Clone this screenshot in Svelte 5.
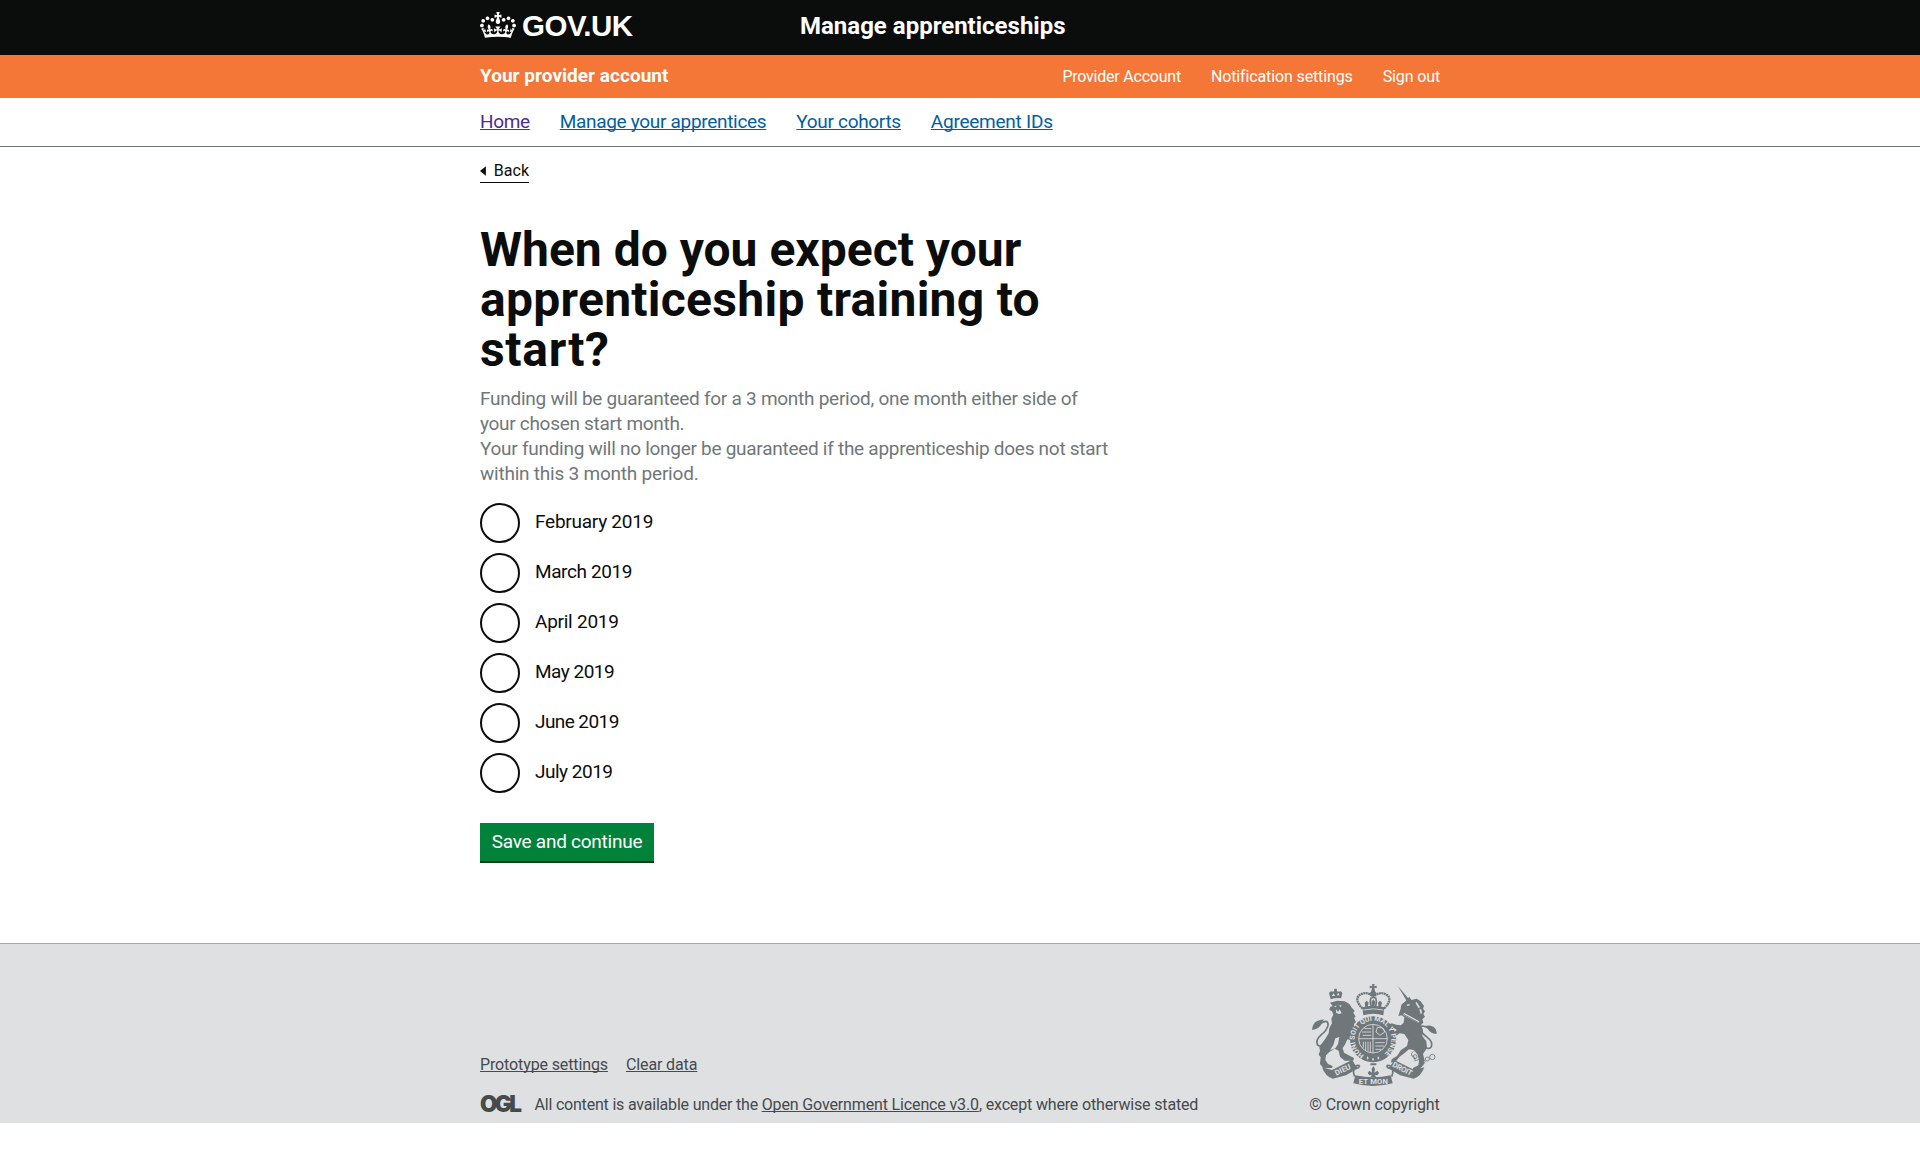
<script>
  const account = ['Provider Account', 'Notification settings', 'Sign out'];
  const nav = ['Home', 'Manage your apprentices', 'Your cohorts', 'Agreement IDs'];
  const months = ['February 2019', 'March 2019', 'April 2019', 'May 2019', 'June 2019', 'July 2019'];
  let chosen = $state('');
</script>

<header class="top">
  <div class="wrap top-row">
    <a class="logo" href="#home">
      <svg class="crown" viewBox="0 0 132 97" preserveAspectRatio="none" aria-hidden="true">
        <path fill="currentColor" fill-rule="evenodd" d="M25 30.2c3.5 1.5 7.7-.2 9.1-3.7 1.5-3.6-.2-7.8-3.9-9.2-3.6-1.4-7.6.3-9.1 3.9-1.4 3.5.3 7.5 3.9 9zM9 39.5c3.6 1.5 7.8-.2 9.2-3.7 1.5-3.6-.2-7.8-3.9-9.1-3.6-1.5-7.6.2-9.1 3.8-1.4 3.5.3 7.5 3.8 9zM4.4 57.2c3.5 1.5 7.7-.2 9.1-3.8 1.5-3.6-.2-7.7-3.9-9.1-3.5-1.5-7.6.3-9.1 3.8-1.4 3.5.3 7.6 3.9 9.1zm38.3-21.4c3.5 1.5 7.7-.2 9.1-3.8 1.5-3.6-.2-7.7-3.9-9.1-3.6-1.5-7.6.3-9.1 3.8-1.3 3.6.4 7.7 3.9 9.1zm64.4-5.6c-3.6 1.5-7.8-.2-9.1-3.7-1.5-3.6.2-7.8 3.8-9.2 3.6-1.4 7.7.3 9.2 3.9 1.3 3.5-.4 7.5-3.9 9zm15.9 9.3c-3.6 1.5-7.7-.2-9.1-3.7-1.5-3.6.2-7.8 3.7-9.1 3.6-1.5 7.7.2 9.2 3.8 1.5 3.5-.3 7.5-3.8 9zm4.7 17.7c-3.6 1.5-7.8-.2-9.2-3.8-1.5-3.6.2-7.7 3.9-9.1 3.6-1.5 7.7.3 9.2 3.8 1.3 3.5-.4 7.6-3.9 9.1zM89.3 35.8c-3.6 1.5-7.8-.2-9.2-3.8-1.4-3.6.2-7.7 3.9-9.1 3.6-1.5 7.7.3 9.2 3.8 1.4 3.6-.3 7.7-3.9 9.1zM69.7 17.7l8.9 4.7V9.3l-8.9 2.8c-.2-.3-.5-.6-.9-.9L72.4 0H59.6l3.5 11.2c-.3.3-.6.5-.9.9l-8.8-2.8v13.1l8.8-4.7c.3.3.6.7.9.9l-5 15.4v.1c-.2.8-.4 1.6-.4 2.4 0 4.1 3.1 7.5 7 8.1h.2c.3 0 .7.1 1 .1.4 0 .7 0 1-.1h.2c4-.6 7.1-4.1 7.1-8.1 0-.8-.1-1.7-.4-2.4V34l-5.1-15.4c.4-.2.7-.6 1-.9zM66 92.8c16.9 0 32.8 1.1 47.1 3.2 4-16.9 8.9-26.7 14-33.5l-9.6-3.4c1 4.9 1.1 7.2 0 10.2-1.5-1.4-3-4.3-4.2-8.7L108.6 76c2.8-2 5-3.2 7.5-3.3-4.4 9.4-10 11.9-13.6 11.2-4.3-.8-6.3-4.6-5.6-7.9 1-4.7 5.7-5.9 8-.5 4.3-8.7-3-11.4-7.6-8.8 7.1-7.2 7.9-13.5 2.1-21.1-8 6.1-8.1 12.3-4.5 20.8-4.7-5.4-12.1-2.5-9.5 6.2 3.4-5.2 7.9-2 7.2 3.1-.6 4.3-6.4 7.8-13.5 7.2-10.3-.9-10.9-8-11.2-13.8 2.5-.5 7.1 1.8 11 7.3L80.2 60c-4.1 4.4-8 5.3-12.3 5.4 1.4-4.4 8-11.6 8-11.6H55.5s6.4 7.2 7.9 11.6c-4.2-.1-8-1-12.3-5.4l1.4 16.4c3.9-5.5 8.5-7.7 10.9-7.3-.3 5.8-.9 12.8-11.1 13.8-7.2.6-12.9-2.9-13.5-7.2-.7-5 3.8-8.3 7.1-3.1 2.7-8.7-4.6-11.6-9.4-6.2 3.7-8.5 3.6-14.7-4.6-20.8-5.8 7.6-5 13.9 2.2 21.1-4.7-2.6-11.9.1-7.7 8.8 2.3-5.5 7.1-4.2 8.1.5.7 3.3-1.3 7.1-5.7 7.9-3.5.7-9-1.8-13.5-11.2 2.5.1 4.7 1.3 7.5 3.3l-4.7-15.4c-1.2 4.4-2.7 7.2-4.3 8.7-1.1-3-.9-5.3 0-10.2l-9.5 3.4c5 6.9 9.9 16.7 14 33.5 14.8-2.1 30.8-3.2 47.7-3.2z" />
      </svg>
      <span>GOV.UK</span>
    </a>
    <span class="service">Manage apprenticeships</span>
  </div>
</header>

<div class="account">
  <div class="wrap account-row">
    <strong>Your provider account</strong>
    <ul>
      {#each account as item}<li><a href="#account">{item}</a></li>{/each}
    </ul>
  </div>
</div>

<nav>
  <ul class="wrap">
    {#each nav as item}<li><a href="#nav">{item}</a></li>{/each}
  </ul>
</nav>

<main class="wrap">
  <a class="back" href="#back">
    <svg viewBox="0 0 6 10" aria-hidden="true"><path d="M6 0v10L0 5z" fill="currentColor" /></svg>
    <span>Back</span>
  </a>
  <h1><span>When do you expect your</span> <span>apprenticeship training to</span> <span>start?</span></h1>
  <p><span>Funding will be guaranteed for a 3 month period, one month either side of</span> <span>your chosen start month.</span> <span>Your funding will no longer be guaranteed if the apprenticeship does not start</span> <span>within this 3 month period.</span></p>
  <div class="radios">
    {#each months as month}
      <label><input type="radio" name="start" value={month} bind:group={chosen} /><span>{month}</span></label>
    {/each}
  </div>
  <button type="button">Save and continue</button>
</main>

<footer>
  <div class="wrap foot">
    <div class="meta">
      <div class="links"><a href="#settings">Prototype settings</a><a href="#clear">Clear data</a></div>
      <div class="licence">
        <span class="ogl">OGL</span>
        <span class="l1">All content is available under the&nbsp;</span><a href="#licence">Open Government Licence v3.0</a><span class="l2">, except where otherwise stated</span>
      </div>
    </div>
    <div class="copy">
      <svg class="crest" viewBox="36 42 375 306" aria-hidden="true">
        <!-- lion: small crown, mane, body and legs -->
        <g class="f">
          <path fill-rule="evenodd" d="M92 88l-5-18q4-9 11-5l4-1 1-8h7l1 8 5 1q8-4 11 5l-4 16q-16-3-31 2zM95 78l6-8 4 8zM110 76l5-8 4 8z" />
          <path d="M90 98l22-6 22 2 14 8 8 12 8 8-4 6 7 12-5 4 6 12-6 6 2 12-10 10 8 12 18 4 6 8-14 6-22-4-8-2-6 14-8 12 4 14 14 8 16 8-2 8-26 0-14-12-4-18-12-6-16 10-10 10-2 14 8 12 14 6-2 6-26 0-10-12 2-20-6-8 4-12-2-10 8-12 10-14 10-16 2-16 8-14-2-14 6-12-4-10-8-4 2-8 8-4z" />
          <path d="M36 180q2-20 14-26 12-6 22-5-8 6-8 14-6 14-28 17z" />
        </g>
        <path class="s w5" d="M62 160q24-14 22 6-4 16-20 28-18 16-12 30 8 8 14 0" />
        <path class="b" d="M94 88q14-4 30-3v3q-16-1-29 3zM102 108l8-1-3 5zM118 105l8 2-6 4zM108 118l6 8 5-8 6 12-8 2-9-4zM106 205l12-4-4 22-8 12-16 6 10-16z" />
        <!-- unicorn: horn, head, body and legs -->
        <g class="f">
          <path d="M293 47l36 43-7 6z" />
          <path d="M302 116l2-12 14-12 10-12 6 10 16-4 12 8 10 14-3 8 6 8-5 8 5 8-8 8 3 10-7 6 6 16-2 18 12 16 2 20-12 18 4 16-2 16-12 14-22 4 2-8 16-8 2-14-4-18-12-14-14-2-14 12-14 10-10 12-16 6 2-10 16-10 12-18 18-12 4-18-12-18-14-2-12 8 2 12-8 4-8-10 2-12 10-8 6-4-14-8-10 8-10-2 2-8 16-10 14 4 14 2 8-8 2-16-8-6-10 2z" />
          <path d="M410 192q0-16-10-22-12-6-26-2 8 4 10 10 6 12 26 14z" />
        </g>
        <path class="s w5" d="M384 174q-24-14-22 4 4 14 20 24 18 14 12 28-8 10-16 2" />
        <path class="b" d="M320 104l8-2 2 4-8 2zM350 96l10 16-4 3-10-17zM364 118l2 12-4 2-4-14zM312 128l46 26-2 5-46-24z" />
        <path class="s w3" d="M312 134l44 24M340 244q-10 8-4 14 8 0 10 8-6 10 6 4 10-2 6-12" />
        <circle class="s w3" cx="364" cy="236" r="5" /><circle class="s w3" cx="369" cy="275" r="6" /><circle class="s w3" cx="382" cy="267" r="6" /><circle class="s w3" cx="397" cy="261" r="8" /><circle class="s w3" cx="345" cy="260" r="6" />
        <!-- garter and quartered shield -->
        <circle class="f" cx="219" cy="208" r="69" />
        <circle class="ring" cx="219" cy="206" r="43" />
        <path id="garter" d="M192 254.500a55 55 0 1 1 54 0" fill="none" transform="translate(0 1)" />
        <text class="motto"><textPath href="#garter" textLength="280">HONI SOIT QUI MAL Y PENSE</textPath></text>
        <path class="b" d="M200 264l3-5 3 5-3 5zM216 268l3-5 3 5-3 5zM232 264l3-5 3 5-3 5z" />
        <path class="line" d="M219 163v86M176 206h86M186 186h28M188 196h26M193 176h21M190 215v18M197 215v26M204 215v30M211 215v32M226 218h28M226 228h26M226 238h18M232 172l-4 14 12 10 14-10-6-12z" />
        <!-- royal crown above the shield -->
        <path class="f" d="M216 42h8l-2 7 8-2v8l-7-2 2 11 5 6-5 8h-11l-5-8 5-6 2-11-7 2v-8l8 2z" />
        <path class="s beads" d="M188 116q-24-24-12-39 20-15 40 0l4 8 4-8q20-15 40 0 12 15-12 39" />
        <path class="s w5" d="M214 82q-6 12 0 28M226 82q6 12 0 28" />
        <path class="f" d="M187 112q33-9 66 0l-3 24q-30-9-60 0zM194 98l6-6 6 6-3 14h-7zM214 96l6-8 6 8-4 16h-5zM234 98l6-6 6 6-3 14h-7z" />
        <path class="line" d="M190 120q30-7 60 0" />
        <!-- motto ribbon -->
        <path class="f" d="M66 292l30 8 60-30 16 26-34 20-40 10q-22-6-32-34zM373 292l-30 8-60-30-16 26 34 20 40 10q22-6 32-34zM166 316q53 12 106 0l6 24q-60 16-118 0z" />
        <path class="s w5" d="M156 274q12 22 18 20 10-8-2-8-18 8-8 34M283 274q-12 22-18 20-10-8 2-8 18 8 8 34" />
        <path class="f" d="M215 296l5-8 5 8-2 12 9-6 5 7-5 7-8-2 5 8H211l5-8-8 2-5-7 5-7 8 6zM211 286h18v-6h-18z" />
        <text class="word" transform="translate(109 317) rotate(-25)" textLength="50">DIEU</text>
        <text class="word" x="176" y="343" textLength="88">ET MON</text>
        <text class="word" transform="translate(275 289) rotate(27)" textLength="64">DROIT</text>
      </svg>
      <a href="#copyright">© Crown copyright</a>
    </div>
  </div>
</footer>

<style>
  :global(body) { background: #fff; color: #0b0c0c; font-family: Roboto, "Liberation Sans", sans-serif; font-weight: 400; }
  ul { list-style: none; margin: 0; padding: 0; display: flex; }
  .wrap { width: 960px; margin: 0 auto; }

  .top { background: #0b0c0c; height: 55px; }
  .top-row { display: flex; color: #fff; }
  .logo { width: 320px; display: flex; align-items: flex-start; gap: 6px; color: #fff; text-decoration: none; font: 700 29.5px/52px "Liberation Sans", Arial, sans-serif; letter-spacing: -.5px; }
  .crown { width: 36px; height: 26px; margin-top: 12px; }
  .service { font-size: 24px; font-weight: 700; line-height: 52px; }

  .account { background: #f47738; height: 43px; color: #fff; }
  .account-row { display: flex; justify-content: space-between; line-height: 43px; }
  .account strong { font-size: 19px; line-height: 41px; letter-spacing: .03px; }
  .account ul { gap: 30px; font-size: 16px; letter-spacing: -.13px; }
  .account li:first-child { letter-spacing: -.22px; }
  .account a { color: #fff; text-decoration: none; }

  nav { height: 48px; border-bottom: 1px solid #6f777b; line-height: 48px; font-size: 19px; }
  nav ul { gap: 30px; }
  nav li { letter-spacing: -.31px; }
  nav li:first-child { letter-spacing: -.35px; }
  nav li:last-child { letter-spacing: -.25px; }
  a { text-decoration-skip-ink: none; text-decoration-thickness: 1px; }
  nav a { color: #005ea5; }
  nav li:first-child a { color: #4c2c92; }

  .back { display: flex; width: 49px; box-sizing: border-box; margin-top: 14px; padding-bottom: 2px; border-bottom: 1px solid #0b0c0c; align-items: center; gap: 8px; font-size: 16px; line-height: 19px; color: #0b0c0c; text-decoration: none; }
  .back svg { width: 6px; height: 10px; }

  h1 { margin: 42px 0 0; font-size: 48px; line-height: 50px; font-weight: 700; width: 640px; }
  h1 span, p span { display: block; white-space: nowrap; }
  h1 span:nth-child(2) { letter-spacing: .28px; }
  h1 span:nth-child(3) { letter-spacing: .7px; }
  p { margin: 11px 0 0; font-size: 19px; line-height: 25px; color: #6f777b; letter-spacing: -.26px; }
  p span:nth-child(2) { letter-spacing: -.3px; }
  p span:nth-child(3) { letter-spacing: -.275px; }
  p span:nth-child(4) { letter-spacing: -.22px; }

  .radios { margin-top: 17px; display: flex; flex-direction: column; gap: 10px; font-size: 19px; }
  label { display: flex; gap: 15px; height: 40px; line-height: 37px; letter-spacing: -.5px; }
  label:nth-child(1), label:nth-child(3) { letter-spacing: -.25px; }
  label:nth-child(2) { letter-spacing: -.4px; }
  label:nth-child(5) { letter-spacing: -.58px; }
  input { appearance: none; margin: 0; width: 40px; height: 40px; box-sizing: border-box; border: 2px solid #0b0c0c; border-radius: 50%; background: #fff; }
  input:checked { box-shadow: inset 0 0 0 8px #fff; background: #0b0c0c; }

  button { display: block; margin: 30px 0 80px; padding: 0; width: 174px; height: 40px; border: 0; border-bottom: 2px solid #003618; background: #00823b; color: #fff; font: 400 19px/36px Roboto, sans-serif; letter-spacing: -.25px; }

  footer { box-sizing: border-box; height: 180px; border-top: 1px solid #a1acb2; background: #dee0e2; color: #454a4c; font-size: 16px; }
  footer a { color: #454a4c; }
  .foot { height: 179px; display: flex; justify-content: space-between; align-items: flex-end; }
  .links { display: flex; gap: 18px; line-height: 20px; margin-bottom: 11px; letter-spacing: -.12px; }
  .licence { display: flex; line-height: 37px; white-space: nowrap; }
  .ogl { width: 54.500px; font: 900 22.5px/36px Inter, sans-serif; letter-spacing: -2.6px; }
  .l1 { letter-spacing: -.2px; }
  .licence a { letter-spacing: -.14px; }
  .l2 { letter-spacing: -.16px; }
  .copy { width: 131px; display: flex; flex-direction: column; align-items: center; }
  .copy a { line-height: 37px; white-space: nowrap; text-decoration: none; letter-spacing: -.13px; }
  .crest { width: 125px; height: 102px; }
  .f { fill: #6f777b; }
  .b { fill: #dee0e2; }
  .s { fill: none; stroke: #6f777b; }
  .w5 { stroke-width: 5; }
  .w3 { stroke-width: 2.5; }
  .beads { stroke-width: 7; stroke-dasharray: 6 1.5; }
  .ring { fill: #6f777b; stroke: #dee0e2; stroke-width: 2.5; }
  .line { fill: none; stroke: #dee0e2; stroke-width: 2.5; }
  .motto { font: 700 21px Roboto, sans-serif; fill: #dee0e2; }
  .word { font: 700 23px Roboto, sans-serif; fill: #dee0e2; }
</style>
